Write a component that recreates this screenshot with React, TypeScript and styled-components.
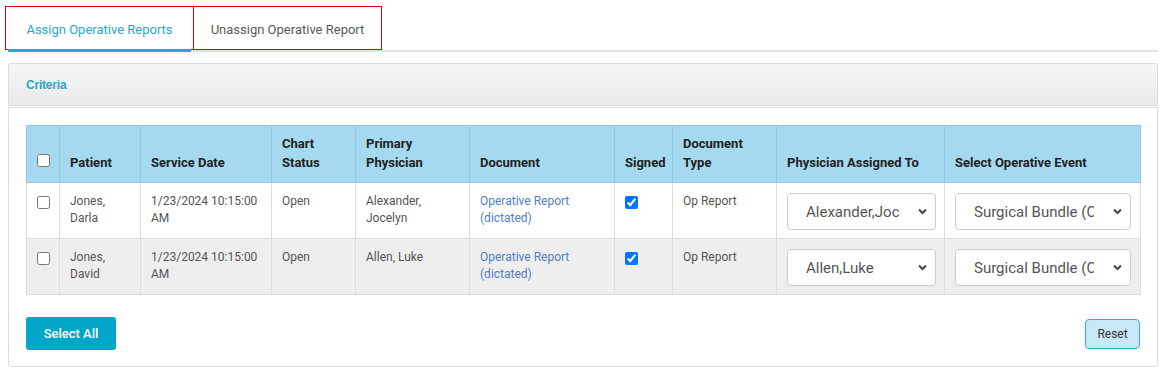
import styled, { createGlobalStyle } from 'styled-components';

const GlobalStyle = createGlobalStyle`
  body {
    margin: 0;
    background: #fff;
    font-family: Roboto, "Liberation Sans", Arial, sans-serif;
  }
`;

const Page = styled.div`
  padding: 0 8px;
`;

const TabBar = styled.div`
  display: flex;
  padding-top: 6px;
  border-bottom: 2px solid #e2e2e2;
`;

const Tab = styled.div<{ $active?: boolean; $width: number }>`
  position: relative;
  box-sizing: border-box;
  width: ${props => props.$width}px;
  height: 44px;
  display: flex;
  align-items: center;
  justify-content: center;
  padding-top: 2px;
  border: 1px solid #e00000;
  font-size: 13px;
  color: ${props => (props.$active ? '#2ba6cb' : '#5a5a5a')};
  margin-left: ${props => (props.$active ? '-3px' : '-1px')};

  ${props =>
    props.$active
      ? `
        &::after {
          content: '';
          position: absolute;
          left: 2px;
          right: 2px;
          bottom: -3px;
          height: 3px;
          background: #2ba6cb;
        }
      `
      : ''};
`;

const Panel = styled.div`
  margin-top: 11px;
`;

const PanelHeader = styled.div`
  height: 41px;
  display: flex;
  align-items: center;
  padding-left: 17px;
  border: 1px solid #dcdcdc;
  border-radius: 3px 3px 0 0;
  background: linear-gradient(#f6f6f6, #e9e9e9);
  font-family: "Liberation Sans", Arial, sans-serif;
  font-weight: bold;
  font-size: 12px;
  color: #2ba6cb;
  letter-spacing: -0.2px;
`;

const PanelBody = styled.div`
  margin-top: 1px;
  border: 1px solid #dcdcdc;
  border-radius: 0 0 3px 3px;
  padding: 17px 17px 16px;
`;

const Table = styled.table`
  width: 1114px;
  table-layout: fixed;
  border-collapse: collapse;
  font-size: 12px;
`;

const Col = styled.col<{ $width: number }>`
  width: ${props => props.$width}px;
`;

const HeadCell = styled.th`
  background: #a4d9ef;
  border: 1px solid #8fcbe4;
  padding: 8px 10px 10px;
  height: 37px;
  text-align: left;
  vertical-align: bottom;
  font-size: 13px;
  font-weight: 700;
  line-height: 19px;
  color: #222;
`;

const Row = styled.tr<{ $striped?: boolean }>`
  background: ${props => (props.$striped ? '#eeeeee' : '#fff')};
`;

const Cell = styled.td`
  border: 1px solid #dddddd;
  padding: 10px 10px 0;
  height: 45px;
  vertical-align: top;
  line-height: 17px;
  color: #555;
`;

const CheckCell = styled(Cell)`
  padding-top: 13px;
  height: 42px;
`;

const CheckBox = styled.input`
  width: 13px;
  height: 13px;
  margin: 0;
`;

const DocLink = styled.a`
  color: #4f81c2;
  text-decoration: none;
`;

const SelectWrap = styled.div<{ $width: number }>`
  position: relative;
  width: ${props => props.$width}px;
`;

const Select = styled.select`
  appearance: none;
  box-sizing: border-box;
  width: 100%;
  height: 37px;
  padding: 0 36px 0 18px;
  border: 1px solid #cccccc;
  border-radius: 4px;
  background: #fff;
  font-family: Roboto, "Liberation Sans", Arial, sans-serif;
  font-size: 15px;
  color: #555;
`;

const Chevron = styled.svg`
  position: absolute;
  right: 9px;
  top: 15px;
  pointer-events: none;
`;

const Actions = styled.div`
  display: flex;
  justify-content: space-between;
  align-items: center;
  margin-top: 22px;
`;

const PrimaryButton = styled.button`
  width: 90px;
  height: 33px;
  border: none;
  border-radius: 3px;
  background: #00a6c8;
  color: #fff;
  font-family: Roboto, "Liberation Sans", Arial, sans-serif;
  font-size: 13px;
  font-weight: 500;
`;

const SecondaryButton = styled.button`
  width: 55px;
  height: 30px;
  border: 1px solid #2db4d4;
  border-radius: 4px;
  background: #c8e8f7;
  color: #333;
  font-family: Roboto, "Liberation Sans", Arial, sans-serif;
  font-size: 12px;
`;

const columns = [
  { label: '', width: 33 },
  { label: 'Patient', width: 81 },
  { label: 'Service Date', width: 131 },
  { label: 'Chart Status', width: 84 },
  { label: 'Primary Physician', width: 114 },
  { label: 'Document', width: 145 },
  { label: 'Signed', width: 58 },
  { label: 'Document Type', width: 104 },
  { label: 'Physician Assigned To', width: 168 },
  { label: 'Select Operative Event', width: 196 },
];

const rows = [
  {
    patient: 'Jones, Darla',
    date: '1/23/2024 10:15:00 AM',
    status: 'Open',
    physician: 'Alexander, Jocelyn',
    assigned: 'Alexander,Jocelyn',
  },
  {
    patient: 'Jones, David',
    date: '1/23/2024 10:15:00 AM',
    status: 'Open',
    physician: 'Allen, Luke',
    assigned: 'Allen,Luke',
  },
];

const DropDown = ({ value, width }: { value: string; width: number }) => (
  <SelectWrap $width={width}>
    <Select defaultValue={value}>
      <option>{value}</option>
    </Select>
    <Chevron width="9" height="7" viewBox="0 0 9 7">
      <path d="M1 1.5l3.5 3.5 3.5-3.5" fill="none" stroke="#444" strokeWidth="2" />
    </Chevron>
  </SelectWrap>
);

export default function App() {
  return (
    <Page>
      <GlobalStyle />
      <TabBar>
        <Tab $active $width={189}>Assign Operative Reports</Tab>
        <Tab $width={189}>Unassign Operative Report</Tab>
      </TabBar>

      <Panel>
        <PanelHeader>Criteria</PanelHeader>
        <PanelBody>
          <Table>
            <colgroup>
              {columns.map((c, i) => (
                <Col key={i} $width={c.width} />
              ))}
            </colgroup>
            <thead>
              <tr>
                <HeadCell>
                  <CheckBox type="checkbox" />
                </HeadCell>
                {columns.slice(1).map(c => (
                  <HeadCell key={c.label}>{c.label}</HeadCell>
                ))}
              </tr>
            </thead>
            <tbody>
              {rows.map((r, i) => (
                <Row key={r.patient} $striped={i % 2 === 1}>
                  <CheckCell>
                    <CheckBox type="checkbox" />
                  </CheckCell>
                  <Cell>{r.patient}</Cell>
                  <Cell>{r.date}</Cell>
                  <Cell>{r.status}</Cell>
                  <Cell>{r.physician}</Cell>
                  <Cell>
                    <DocLink href="#">Operative Report (dictated)</DocLink>
                  </Cell>
                  <CheckCell>
                    <CheckBox type="checkbox" defaultChecked />
                  </CheckCell>
                  <Cell>Op Report</Cell>
                  <Cell>
                    <DropDown value={r.assigned} width={149} />
                  </Cell>
                  <Cell>
                    <DropDown value="Surgical Bundle (Colon)" width={176} />
                  </Cell>
                </Row>
              ))}
            </tbody>
          </Table>

          <Actions>
            <PrimaryButton>Select All</PrimaryButton>
            <SecondaryButton>Reset</SecondaryButton>
          </Actions>
        </PanelBody>
      </Panel>
    </Page>
  );
}
